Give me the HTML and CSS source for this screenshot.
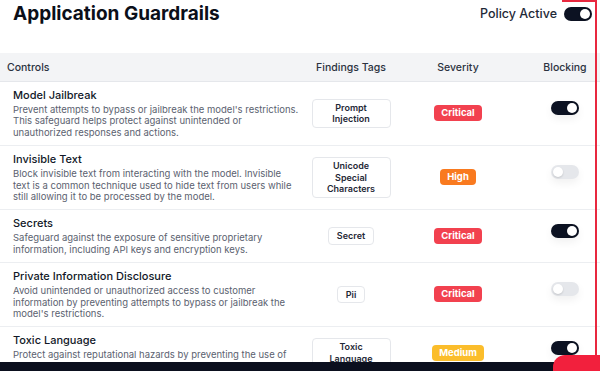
FILE: index.html
```html
<!DOCTYPE html>
<html lang="en">
  <head>
    <meta charset="UTF-8" />
    <meta name="viewport" content="width=device-width, initial-scale=1.0" />
    <title>Application Guardrails</title>
    <link rel="stylesheet" href="styles.css">
  </head>
  <body>
    <div class="page">
      <header class="top">
        <h1>Application Guardrails</h1>
        <div class="policy">
          <span>Policy Active</span>
          <span class="switch on"></span>
        </div>
      </header>

      <div class="table">
        <div class="row head">
          <div class="control">Controls</div>
          <div class="cell">Findings Tags</div>
          <div class="cell">Severity</div>
          <div class="cell block">Blocking</div>
        </div>

        <div class="row">
          <div class="control">
            <div class="name">Model Jailbreak</div>
            <p class="desc">Prevent attempts to bypass or jailbreak the model's restrictions. This safeguard helps protect against unintended or unauthorized responses and actions.</p>
          </div>
          <div class="cell"><span class="tag">Prompt Injection</span></div>
          <div class="cell"><span class="sev critical">Critical</span></div>
          <div class="cell block"><span class="switch on"></span></div>
        </div>

        <div class="row">
          <div class="control">
            <div class="name">Invisible Text</div>
            <p class="desc">Block invisible text from interacting with the model. Invisible text is a common technique used to hide text from users while still allowing it to be processed by the model.</p>
          </div>
          <div class="cell"><span class="tag">Unicode Special Characters</span></div>
          <div class="cell"><span class="sev high">High</span></div>
          <div class="cell block"><span class="switch"></span></div>
        </div>

        <div class="row">
          <div class="control">
            <div class="name">Secrets</div>
            <p class="desc">Safeguard against the exposure of sensitive proprietary information, including API keys and encryption keys.</p>
          </div>
          <div class="cell"><span class="tag">Secret</span></div>
          <div class="cell"><span class="sev critical">Critical</span></div>
          <div class="cell block"><span class="switch on"></span></div>
        </div>

        <div class="row">
          <div class="control">
            <div class="name">Private Information Disclosure</div>
            <p class="desc">Avoid unintended or unauthorized access to customer information by preventing attempts to bypass or jailbreak the model's restrictions.</p>
          </div>
          <div class="cell"><span class="tag">Pii</span></div>
          <div class="cell"><span class="sev critical">Critical</span></div>
          <div class="cell block"><span class="switch"></span></div>
        </div>

        <div class="row">
          <div class="control">
            <div class="name">Toxic Language</div>
            <p class="desc">Protect against reputational hazards by preventing the use of toxic, offensive, or harmful language.</p>
          </div>
          <div class="cell"><span class="tag">Toxic Language</span></div>
          <div class="cell"><span class="sev medium">Medium</span></div>
          <div class="cell block"><span class="switch on"></span></div>
        </div>
      </div>

      <!-- overlays at the edge of the capture -->
      <div class="frame"></div>
      <div class="dock"></div>
      <div class="fab"></div>
    </div>
  </body>
</html>
```

FILE: styles.css
```css
/* base */
body {
    margin: 0;
    font-family: Inter, "Noto Sans", sans-serif;
    background-color: #ffffff;
    color: #111827;
}

.page {
    position: relative;
    width: 600px;
    height: 371px;
    overflow: hidden;
}

/* title bar */
.top {
    display: flex;
    justify-content: space-between;
    align-items: flex-start;
    height: 53px;
    padding: 2px 8px 0 13px;
    box-sizing: border-box;
}

.top h1 {
    margin: 0;
    font-size: 19px;
    line-height: 24px;
    font-weight: 700;
    color: #0b0f19;
}

.policy {
    display: flex;
    align-items: center;
    gap: 7px;
    margin-top: 4px;
    font-size: 12.5px;
    font-weight: 500;
    color: #1f2937;
}

/* table */
.row {
    display: grid;
    grid-template-columns: 305px 92px 122px 81px;
    align-items: center;
    padding: 6px 0 7px;
    border-bottom: 1px solid #eceef1;
}

.row.head {
    height: 29px;
    padding: 0;
    box-sizing: border-box;
    background-color: #f3f4f6;
    border-bottom: 1px solid #e5e7eb;
    font-size: 10.5px;
    font-weight: 500;
    color: #2b3240;
}

.control {
    padding-left: 13px;
    padding-right: 6px;
}

.head .control {
    padding-left: 7px;
}

.cell {
    display: flex;
    justify-content: center;
    text-align: center;
}

.cell.block {
    padding-left: 11px;
}

.name {
    font-size: 11px;
    line-height: 14px;
    font-weight: 500;
    color: #111827;
}

.desc {
    margin: 2px 0 0;
    font-size: 9.5px;
    line-height: 11.4px;
    color: #5b6270;
}

/* findings tag */
.tag {
    display: inline-block;
    max-width: 79px;
    box-sizing: border-box;
    padding: 2px 8px;
    border: 1px solid #e5e7eb;
    border-radius: 4px;
    font-size: 9px;
    line-height: 11.5px;
    font-weight: 600;
    color: #1f2937;
}

/* severity */
.sev {
    display: inline-block;
    padding: 0 7px;
    border-radius: 4px;
    font-size: 9.5px;
    line-height: 16px;
    font-weight: 700;
    color: #ffffff;
}

.critical { background-color: #f2414f; }
.high { background-color: #f97a1f; }
.medium { background-color: #fbbd2b; }

/* toggle */
.switch {
    position: relative;
    display: inline-block;
    width: 28px;
    height: 14px;
    border-radius: 7px;
    background-color: #e5e7eb;
}

.switch::after {
    content: "";
    position: absolute;
    top: 2px;
    left: 2px;
    width: 10px;
    height: 10px;
    border-radius: 50%;
    background-color: #ffffff;
    box-shadow: 0 1px 2px rgba(0, 0, 0, 0.15);
}

.switch.on {
    background-color: #0c1222;
}

.switch.on::after {
    left: 16px;
}

.cell .switch {
    margin-bottom: 10px;
    box-shadow: 0 4px 8px rgba(0, 0, 0, 0.06);
}

/* edge overlays */
.frame {
    position: absolute;
    top: 0;
    left: 562px;
    width: 33px;
    height: 355px;
    border-top: 2px solid #e8283f;
    border-right: 2px solid #e8283f;
}

.dock {
    position: absolute;
    left: 0;
    right: 0;
    bottom: 0;
    height: 9px;
    background-color: #0b0f1e;
}

.fab {
    position: absolute;
    left: 553px;
    right: 0;
    top: 355px;
    bottom: 0;
    border-top-left-radius: 12px;
    background-color: #f2203d;
}
```
